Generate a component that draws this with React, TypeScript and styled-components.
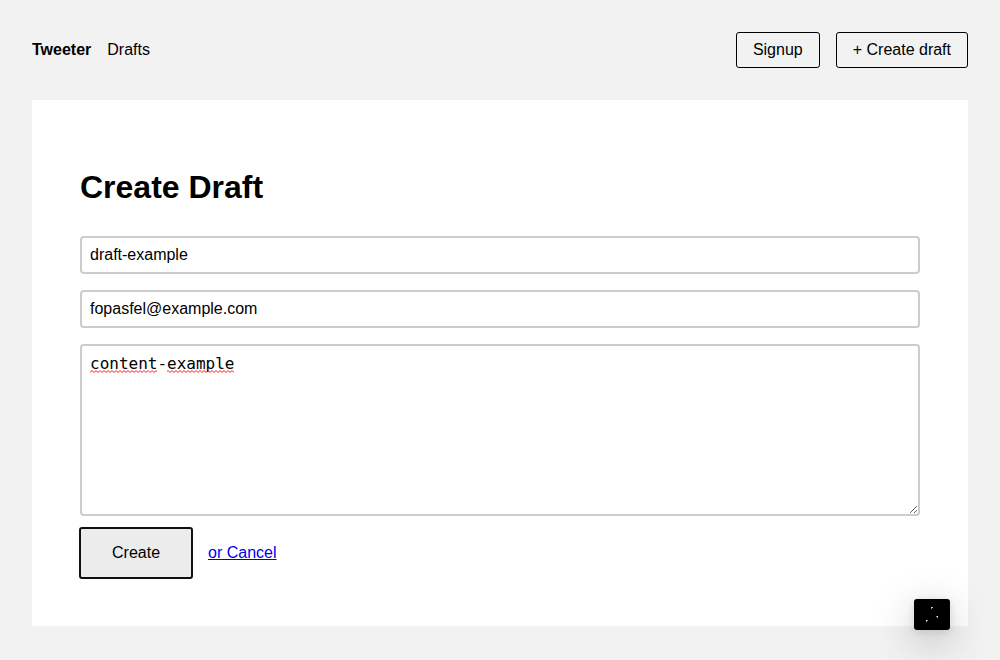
import React from "react";
import styled, { createGlobalStyle } from "styled-components";

const GlobalStyle = createGlobalStyle`
  html {
    box-sizing: border-box;
  }
  *, *::before, *::after {
    box-sizing: inherit;
  }
  body {
    margin: 0;
    padding: 0;
    font-family: "Liberation Sans", Arial, sans-serif;
    font-size: 16px;
    line-height: 18px;
    color: #000;
    background: #f2f2f2;
  }
`;

const Nav = styled.nav`
  display: flex;
  align-items: center;
  justify-content: space-between;
  padding: 32px;
`;

const NavGroup = styled.div`
  display: flex;
  gap: 16px;
`;

const NavLink = styled.a<{ $active?: boolean }>`
  color: #000;
  text-decoration: none;
  font-weight: ${(p) => (p.$active ? 700 : 400)};
`;

const ButtonLink = styled(NavLink)`
  padding: 8px 16px;
  border: 1px solid #000;
  border-radius: 3px;
`;

const Main = styled.main`
  padding: 0 32px;
`;

const Page = styled.section`
  padding: 48px;
  background: #fff;
`;

const Form = styled.form`
  display: flex;
  flex-direction: column;
`;

const Title = styled.h1`
  margin: 21px 0 30px;
  font-size: 32px;
  line-height: 37px;
`;

const TextInput = styled.input`
  width: 100%;
  height: 38px;
  margin-bottom: 16px;
  padding: 8px;
  border: 2px solid #ccc;
  border-radius: 4px;
  font: inherit;
  color: #000;
  background: #fff;
`;

const Editor = styled.div`
  position: relative;
  margin-bottom: 12px;
`;

const TextArea = styled.textarea`
  display: block;
  width: 100%;
  height: 172px;
  padding: 8px;
  border: 2px solid #ccc;
  border-radius: 4px;
  font-family: "DejaVu Sans Mono", monospace;
  font-size: 16px;
  line-height: 19px;
  color: #000;
  background: #fff;
`;

const SpellingMarks = styled.svg`
  position: absolute;
  top: 26px;
  left: 10px;
  pointer-events: none;
`;

const Actions = styled.div`
  display: flex;
  align-items: center;
  gap: 16px;
`;

const SubmitButton = styled.button`
  padding: 16px 32px;
  border: 0;
  border-radius: 2px;
  outline: 2px solid #101010;
  outline-offset: -1px;
  font: inherit;
  color: #000;
  background: #ececec;
`;

const CancelLink = styled.a`
  color: #0000ee;
  text-decoration: underline;
`;

const BuildIndicator = styled.div`
  position: fixed;
  right: 50px;
  bottom: 30px;
  display: flex;
  padding: 8px 10px;
  border-radius: 3px;
  background: #000;
  box-shadow: 0 11px 40px 0 rgba(0, 0, 0, 0.25), 0 2px 10px 0 rgba(0, 0, 0, 0.12);
`;

export default function App() {
  return (
    <>
      <GlobalStyle />
      <Nav>
        <NavGroup>
          <NavLink href="#home" $active>Tweeter</NavLink>
          <NavLink href="#drafts">Drafts</NavLink>
        </NavGroup>
        <NavGroup>
          <ButtonLink href="#signup">Signup</ButtonLink>
          <ButtonLink href="#create">+ Create draft</ButtonLink>
        </NavGroup>
      </Nav>
      <Main>
        <Page>
          <Form onSubmit={(e: React.FormEvent) => e.preventDefault()}>
            <Title>Create Draft</Title>
            <TextInput type="text" aria-label="Title" defaultValue="draft-example" />
            <TextInput type="text" aria-label="Author email" defaultValue="fopasfel@example.com" />
            <Editor>
              <TextArea aria-label="Content" spellCheck={false} defaultValue="content-example" />
              <SpellingMarks width="145" height="3" aria-hidden="true">
                <defs>
                  <pattern id="wave" width="4" height="3" patternUnits="userSpaceOnUse">
                    <path d="M-1 1.5L0 2.5L2 .5L4 2.5L5 1.5" fill="none" stroke="#f00" strokeOpacity=".9" />
                  </pattern>
                </defs>
                <rect width="67" height="3" fill="url(#wave)" />
                <rect x="77" width="67" height="3" fill="url(#wave)" />
              </SpellingMarks>
            </Editor>
            <Actions>
              <SubmitButton type="submit">Create</SubmitButton>
              <CancelLink href="#cancel">or Cancel</CancelLink>
            </Actions>
          </Form>
        </Page>
      </Main>
      <BuildIndicator>
        <svg width="16" height="15" viewBox="0 0 16 15" fill="#fff" aria-hidden="true">
          <path d="M7 0h1v1H7zM13 9h1v1h-1zM2 13h1v1H2z" fillOpacity=".9" />
          <path d="M8 0h1v1H8zM7 1h1v1H7zM13 10h1v1h-1zM12 9h1v1h-1zM3 13h1v1H3zM2 14h1v1H2z" fillOpacity=".6" />
        </svg>
      </BuildIndicator>
    </>
  );
}
